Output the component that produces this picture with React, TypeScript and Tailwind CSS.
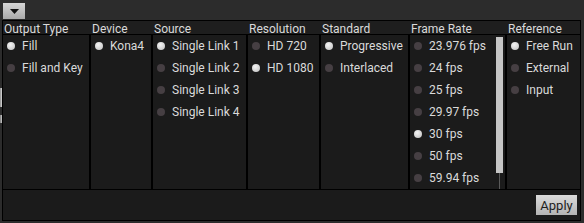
import React from 'react';

type Col = { title: string; width: string; items: string[]; selected: number; scroll?: boolean };

const columns: Col[] = [
    { title: 'Output Type', width: 'w-[88px]', items: ['Fill', 'Fill and Key'], selected: 0 },
    { title: 'Device', width: 'w-[62px]', items: ['Kona4'], selected: 0 },
    { title: 'Source', width: 'w-[95px]', items: ['Single Link 1', 'Single Link 2', 'Single Link 3', 'Single Link 4'], selected: 0 },
    { title: 'Resolution', width: 'w-[73px]', items: ['HD 720', 'HD 1080'], selected: 1 },
    { title: 'Standard', width: 'w-[89px]', items: ['Progressive', 'Interlaced'], selected: 0 },
    { title: 'Frame Rate', width: 'w-[97px]', items: ['23.976 fps', '24 fps', '25 fps', '29.97 fps', '30 fps', '50 fps', '59.94 fps'], selected: 4, scroll: true },
    { title: 'Reference', width: 'flex-1', items: ['Free Run', 'External', 'Input'], selected: 0 },
];

const Dot: React.FC<{ on: boolean }> = ({ on }) => (
    <span
        className={
            on
                ? 'w-[8px] h-[8px] rounded-full bg-[radial-gradient(circle_at_40%_35%,#f4f4f4,#bdbdbd)] shrink-0'
                : 'w-[8px] h-[8px] rounded-full bg-[#463f43] shrink-0'
        }
    />
);

const App: React.FC = () => {
    return (
        <div className="w-[584px] h-[223px] bg-[#2c2c2c] text-[#dadada] text-[12px] leading-none overflow-hidden" style={{ fontFamily: 'Roboto, "Liberation Sans", sans-serif' }}>
            {/* top bar with dropdown */}
            <div className="h-[20px] pl-[3px] pt-[3px]">
                <button className="w-[22px] h-[16px] bg-[linear-gradient(#d6d6d6,#a9a9a9)] flex items-center justify-center">
                    <svg width="9" height="5" viewBox="0 0 9 5"><polygon points="0,0 9,0 4.5,5" fill="#111" /></svg>
                </button>
            </div>

            <div className="flex">
                <div className="w-[2px] flex flex-col">
                    <div className="h-[68px]" />
                    <div className="h-[19px] bg-[linear-gradient(90deg,#888,#ddd)]" />
                    <div className="h-[8px]" />
                    <div className="h-[8px] bg-[linear-gradient(90deg,#777,#ccc)]" />
                </div>

                <div className="w-[579px] h-[201px] border border-black bg-[#1b1b1b] flex flex-col">
                    {/* header */}
                    <div className="h-[14px] flex border-b border-black bg-[#1e1e1e]">
                        {columns.map(c => (
                            <div key={c.title} className={`${c.width} pl-[1px] pt-[2px] shrink-0 whitespace-nowrap`}>
                                {c.title}
                            </div>
                        ))}
                    </div>

                    {/* body */}
                    <div className="h-[155px] flex border-b border-black">
                        {columns.map((c, ci) => (
                            <div
                                key={c.title}
                                className={`${c.width} shrink-0 flex ${ci < columns.length - 1 ? 'border-r-2 border-black' : ''}`}
                            >
                                <div className="flex-1 flex flex-col pt-[0px]">
                                    {c.items.map((it, i) => (
                                        <div key={it} className="h-[22px] flex items-center pl-[4px] gap-[7px] whitespace-nowrap">
                                            <Dot on={i === c.selected} />
                                            <span>{it}</span>
                                        </div>
                                    ))}
                                </div>
                                {c.scroll && (
                                    <div className="w-[8px] mr-[2px] pt-[2px] flex flex-col items-center">
                                        <div className="w-[7px] h-[136px] bg-[#c6c6c6]" />
                                        <div className="w-[1px] flex-1 bg-[#5a5a5a]" />
                                    </div>
                                )}
                            </div>
                        ))}
                    </div>

                    {/* footer */}
                    <div className="flex-1 flex justify-end items-center pr-[3px]">
                        <button className="w-[41px] h-[20px] bg-[linear-gradient(#dcdcdc,#b4b4b4)] text-[#1e1e1e] text-[13px]">
                            Apply
                        </button>
                    </div>
                </div>
            </div>
        </div>
    );
};

export default App;
